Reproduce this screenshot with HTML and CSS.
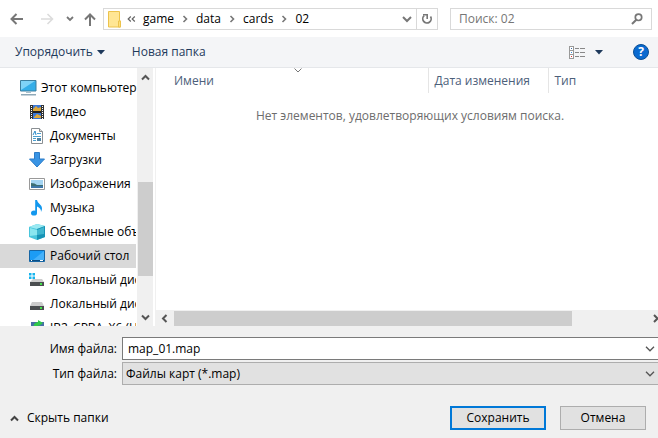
FILE: index.html
```html
<!DOCTYPE html>
<html lang="ru">
<head>
<meta charset="utf-8">
<title>Сохранение</title>
<link rel="stylesheet" href="styles.css">
</head>
<body>
<form class="dialog">
  <header class="nav">
    <button type="button" class="plain" aria-label="Назад"><svg width="14" height="12" viewBox="0 0 14 12"><path d="M6.500 1L1.500 6l5 5M2 6h11" fill="none" stroke="#777" stroke-width="2"/></svg></button>
    <button type="button" class="plain forward" aria-label="Вперёд"><svg width="14" height="12" viewBox="0 0 14 12"><path d="M7.500 1l5 5-5 5M12 6H1" fill="none" stroke="#dcdcdc" stroke-width="1.600"/></svg></button>
    <button type="button" class="plain recent" aria-label="Последние"><svg width="8" height="6" viewBox="0 0 8 6"><path d="M1 1l3 3 3-3" fill="none" stroke="#777" stroke-width="1.800"/></svg></button>
    <button type="button" class="plain up" aria-label="Вверх"><svg width="12" height="13" viewBox="0 0 12 13"><path d="M1 6.500l5-5 5 5M6 2v11" fill="none" stroke="#777" stroke-width="2"/></svg></button>
    <div class="address">
      <svg class="folder" width="14" height="17" viewBox="0 0 14 17"><path d="M.5.5h11V10h1v6H.5z" fill="#ffe694" stroke="#ecc34c"/><path d="M10.500 16v-6h2v6z" fill="#ffe07c" stroke="#ecc34c"/></svg>
      <svg class="more" width="9" height="6" viewBox="0 0 9 6"><path d="M3.800.5L1.200 3l2.600 2.500M7.800.5L5.200 3l2.600 2.500" fill="none" stroke="#666" stroke-width="1.200"/></svg>
      <nav class="crumbs">
        <a href="#">game</a><svg width="6" height="8" viewBox="0 0 6 8"><path d="M1.500 1l3 3-3 3" fill="none" stroke="#777" stroke-width="1.600"/></svg>
        <a href="#">data</a><svg width="6" height="8" viewBox="0 0 6 8"><path d="M1.500 1l3 3-3 3" fill="none" stroke="#777" stroke-width="1.600"/></svg>
        <a href="#">cards</a><svg width="6" height="8" viewBox="0 0 6 8"><path d="M1.500 1l3 3-3 3" fill="none" stroke="#777" stroke-width="1.600"/></svg>
        <a href="#">02</a>
      </nav>
      <button type="button" class="plain history" aria-label="Журнал"><svg width="10" height="7" viewBox="0 0 10 7"><path d="M1 1l4 4 4-4" fill="none" stroke="#777" stroke-width="2"/></svg></button>
      <button type="button" class="plain refresh" aria-label="Обновить"><svg width="12" height="12" viewBox="0 0 12 12"><path d="M3.200 2.600A4.200 4.200 0 1 0 9.500 3.500" fill="none" stroke="#777" stroke-width="1.700"/><path d="M2 1.800h4.200V6" fill="none" stroke="#777" stroke-width="1.600"/></svg></button>
    </div>
    <div class="search">
      <input type="search" placeholder="Поиск: 02" aria-label="Поиск">
      <svg width="12" height="12" viewBox="0 0 12 12"><circle cx="7.500" cy="4.300" r="3.200" fill="none" stroke="#777" stroke-width="1.700"/><path d="M5.300 6.700L1 11" stroke="#777" stroke-width="2"/></svg>
    </div>
  </header>

  <div class="toolbar">
    <button type="button" class="plain command">Упорядочить<svg width="8" height="5" viewBox="0 0 8 5"><path d="M0 0h8L4 4.500z" fill="#1e395b"/></svg></button>
    <button type="button" class="plain command">Новая папка</button>
    <button type="button" class="plain view" aria-label="Вид"><svg width="16" height="13" viewBox="0 0 16 13" shape-rendering="crispEdges"><path d="M.5.5h4v12h-4zM.5 4.500h4M.5 8.500h4" fill="#fff" stroke="#999"/><path d="M2 2h1v1H2z" fill="#3a6ea5"/><path d="M2 6h1v1H2z" fill="#3a8dde"/><path d="M2 10h1v1H2z" fill="#d33"/><path d="M6 2.500h4m1 0h5M6 6.500h4m1 0h5M6 10.500h4m1 0h5" stroke="#888"/></svg><svg width="8" height="5" viewBox="0 0 8 5"><path d="M0 0h8L4 4.500z" fill="#1e395b"/></svg></button>
    <button type="button" class="help" aria-label="Справка">?</button>
  </div>

  <div class="body">
    <aside class="side">
      <ul class="tree">
        <li class="root"><svg width="17" height="16" viewBox="0 0 17 16"><path d="M.5.500h15.500v10.500H.500z" fill="#35aee8" stroke="#3d7f9f"/><path d="M1 1h14L1 10z" fill="#7fd3f7"/><path d="M6 12h5v1H6z" fill="#a9c0cc"/><path d="M1 14h15v1.500H1z" fill="#8fa9b8"/></svg>Этот компьютер</li>
        <li><svg width="16" height="16" viewBox="0 0 16 16"><path d="M1 1h14v14H1z" fill="#333"/><path d="M4 1h8v14H4z" fill="#3a78d8"/><path d="M4 7h8v2H4z" fill="#222"/><path d="M4 5l3-3 2 2 3-1v4H4zM5 13l3-3 4 2v2H5z" fill="#e0a93a"/><path d="M2.500 2v13M13.500 2v13" stroke="#fff" stroke-dasharray="1 1"/></svg>Видео</li>
        <li><svg width="16" height="16" viewBox="0 0 16 16"><path d="M2.500.5h8l3 3v12h-11z" fill="#fff" stroke="#8a8f93"/><path d="M10.500.5v3h3" fill="#ddd" stroke="#8a8f93"/><path d="M4 7l2-4 1 4" fill="none" stroke="#2b8bc9"/><path d="M8 5.500h4M4 8.500h8M4 10.500h3M4 12.500h3" stroke="#4ba0d0"/><path d="M8 10h4v3H8z" fill="#4d83a5"/></svg>Документы</li>
        <li><svg width="16" height="16" viewBox="0 0 16 16"><path d="M5.500.5h5V7h5L8 15 .5 7h5z" fill="#3994e4" stroke="#2c7cc8"/></svg>Загрузки</li>
        <li><svg width="16" height="16" viewBox="0 0 16 16"><path d="M.5 2.500h15v11H.5z" fill="#fff" stroke="#999"/><path d="M2 4h12v8H2z" fill="#a4d4f2"/><path d="M2 7q4 0 6 2h6v3H2z" fill="#3d6f74"/><path d="M2 10h12v2H2z" fill="#3e76a9"/></svg>Изображения</li>
        <li><svg width="16" height="16" viewBox="0 0 16 16"><ellipse cx="5" cy="13" rx="3" ry="2.600" fill="#1398ee"/><path d="M6.200 0H8q.3 2.500 3 4.500 3.500 3 1 7.500.3-4-4-5.500V13H6.200z" fill="#1398ee"/></svg>Музыка</li>
        <li><svg width="16" height="16" viewBox="0 0 16 16"><path d="M0 3l8-3 8 2v11l-8 3-8-3z" fill="#49c6dc"/><path d="M0 3l8-3 8 2-8 3z" fill="#9ae9f2"/><path d="M8 5l8-3v11l-8 3z" fill="#1793b5"/><path d="M8 6l7-3v7l-7 1z" fill="#3fb6cf"/><path d="M1 4l7 2v5l-7 1z" fill="#8ae6ef"/></svg>Объемные объекты</li>
        <li class="selected"><svg width="16" height="16" viewBox="0 0 16 16"><path d="M.5 2.500h15v11H.5z" fill="#1c9cf5" stroke="#1766a5"/><path d="M15 3v9L4 12z" fill="#45b1fa"/><path d="M1 12.500h14" stroke="#0b4d82"/><path d="M2 12h1v1H2zM11 12h3v1h-3z" fill="#fff"/></svg>Рабочий стол</li>
        <li><svg width="16" height="16" viewBox="0 0 16 16"><path d="M0 1h2.500v2.500H0zM3.500 1H6v2.500H3.500zM0 4.500h2.500V7H0zM3.500 4.500H6V7H3.500z" fill="#15b4ee"/><path d="M4 7h9l2 3H1z" fill="#ccc"/><path d="M1 10h14v4H1z" fill="#4b4e50"/><path d="M11 11h2v2h-2z" fill="#45e04b"/></svg>Локальный диск (C:)</li>
        <li><svg width="16" height="16" viewBox="0 0 16 16"><path d="M3 6h10l2 4H1z" fill="#ccc"/><path d="M1 10h14v4H1z" fill="#4b4e50"/><path d="M11 11h2v2h-2z" fill="#45e04b"/></svg>Локальный диск (D:)</li>
        <li><svg width="16" height="16" viewBox="0 0 16 16"><path d="M2 2h13v12H2z" fill="#466fa6"/><path d="M5 10Q3 3 9 2V0l5 3-4 3V5Q8 6 9 10z" fill="#30c94a"/></svg>JB2_CPBA_X6 (H:)</li>
      </ul>
      <div class="vbar"><svg width="9" height="7" viewBox="0 0 9 7"><path d="M1 5.500L4.500 2 8 5.500" fill="none" stroke="#555" stroke-width="2"/></svg><span class="vthumb"></span><svg width="9" height="7" viewBox="0 0 9 7"><path d="M1 1.500L4.500 5 8 1.500" fill="none" stroke="#555" stroke-width="2"/></svg></div>
    </aside>
    <main class="files">
      <table class="list">
        <thead><tr><th class="name">Имени<svg class="sort" width="8" height="5" viewBox="0 0 8 5"><path d="M.5.5L4 4 7.500.5" fill="none" stroke="#777"/></svg></th><th class="date">Дата изменения</th><th class="type">Тип</th></tr></thead>
        <tbody><tr><td colspan="3">Нет элементов, удовлетворяющих условиям поиска.</td></tr></tbody>
      </table>
      <div class="hbar"><svg width="7" height="9" viewBox="0 0 7 9"><path d="M5.500 1L2 4.500 5.500 8" fill="none" stroke="#555" stroke-width="2"/></svg><span class="hthumb"></span><svg width="5" height="9" viewBox="0 0 5 9"><path d="M1 1l3.500 3.500L1 8" fill="none" stroke="#555" stroke-width="2"/></svg></div>
    </main>
  </div>

  <footer class="footer">
    <div class="fields">
      <label for="file">Имя файла:</label>
      <div class="combo"><input id="file" type="text" value="map_01.map"><svg width="10" height="6" viewBox="0 0 10 6"><path d="M1 .8l4 4 4-4" fill="none" stroke="#555" stroke-width="1.300"/></svg></div>
      <label for="kind">Тип файла:</label>
      <div class="combo"><select id="kind"><option>Файлы карт (*.map)</option></select><svg width="10" height="6" viewBox="0 0 10 6"><path d="M1 .8l4 4 4-4" fill="none" stroke="#555" stroke-width="1.300"/></svg></div>
    </div>
    <div class="actions">
      <button type="button" class="plain hide"><svg width="9" height="7" viewBox="0 0 9 7"><path d="M1 5.500L4.500 2 8 5.500" fill="none" stroke="#444" stroke-width="2"/></svg>Скрыть папки</button>
      <button type="submit" class="btn primary">Сохранить</button>
      <button type="button" class="btn">Отмена</button>
    </div>
  </footer>
</form>
</body>
</html>
```

FILE: styles.css
```css
* { box-sizing: border-box; }
body {
  margin: 0;
  font: 12px/16px "Open Sans", "Noto Sans", sans-serif;
  color: #000;
  background: #fff;
}
button, input, select { font: inherit; color: inherit; margin: 0; }
svg { display: block; flex: none; }
.dialog { display: flex; flex-direction: column; height: 100vh; overflow: hidden; }
.plain { display: flex; align-items: center; border: 0; padding: 0; background: none; }

.nav { display: flex; align-items: center; padding: 8px 6px 7px 10px; }
.forward { margin-left: 16px; }
.recent { margin-left: 12px; }
.up { margin: 0 7px 0 10px; }
.address { flex: 1; display: flex; align-items: center; height: 22px; border: 1px solid #d9d9d9; padding-left: 4px; }
.more { margin: 0 7px 0 5px; }
.crumbs { flex: 1; display: flex; align-items: center; gap: 8px; }
.crumbs a { color: #000; text-decoration: none; }
.history { margin-right: 4px; }
.refresh { align-self: stretch; padding: 0 4px; border-left: 1px solid #d9d9d9; }
.search { flex: 0 1 202px; display: flex; align-items: center; height: 22px; margin-left: 12px; padding: 0 8px; border: 1px solid #d9d9d9; }
.search input { flex: 1; min-width: 0; border: 0; padding: 0; outline: 0; background: none; }
.search input::placeholder { color: #767676; opacity: 1; }

.toolbar { display: flex; align-items: center; height: 31px; padding: 0 9px 0 15px; background: #f4f5f7; border-bottom: 1px solid #e5e7ea; color: #1e395b; }
.command { gap: 4px; margin-right: 27px; }
.view { gap: 10px; margin-left: auto; }
.help { width: 16px; height: 16px; margin-left: 30px; padding: 0; border: 1px solid #0b4f94; border-radius: 50%; background: #0a6ad0; color: #fff; font-weight: 700; line-height: 14px; }

.body { flex: 1; min-height: 0; display: flex; }
.side { display: flex; width: 156px; border-right: 1px solid #f0f0f0; }
.tree { flex: 1; min-width: 0; margin: 0; padding: 8px 0 0; list-style: none; overflow: hidden; }
.tree li { display: flex; align-items: center; gap: 5px; height: 24px; padding-left: 29px; margin-right: 1px; white-space: nowrap; overflow: hidden; }
.tree .root { gap: 4px; padding-left: 20px; margin-right: 0; }
.tree .selected { background: #d9d9d9; }
.vbar { display: flex; flex-direction: column; align-items: center; width: 16px; margin-right: 2px; padding: 6px 0 5px; background: #f0f0f0; }
.vthumb { width: 15px; height: 94px; margin: auto 0 38px; background: #cdcdcd; }

.files { flex: 1; min-width: 0; display: flex; flex-direction: column; justify-content: space-between; }
.list { width: 100%; border-collapse: collapse; table-layout: fixed; color: #6d6d6d; }
.list th { position: relative; height: 25px; padding: 0 0 0 6px; border-right: 1px solid #e5e5e5; font-weight: 400; text-align: left; color: #4c607a; }
.list .name { padding-left: 18px; }
.list .date { width: 120px; }
.list .type { width: 110px; border-right: 0; }
.sort { position: absolute; top: 0; left: 51%; }
.list td { padding: 15px 0 0 6px; text-align: center; }
.hbar { display: flex; align-items: center; height: 16px; padding: 0 0 0 5px; background: #f0f0f0; }
.hthumb { width: 398px; height: 15px; margin: 0 auto 0 6px; background: #cdcdcd; }

.footer { background: #f0f0f0; padding: 11px 0 8px; }
.fields { display: grid; grid-template-columns: 117px 1fr; gap: 2px 5px; align-items: center; }
.fields label { text-align: right; }
.combo { position: relative; }
.combo input, .combo select { display: block; appearance: none; width: 100%; height: 23px; padding: 0 20px 0 5px; border: 1px solid #7a7a7a; border-right: 0; border-radius: 0; background: #fff; outline: 0; }
.combo select { padding-left: 3px; border-color: #adadad; background: #e1e1e1; }
.combo svg { position: absolute; top: 9px; right: 3px; pointer-events: none; }
.actions { display: flex; align-items: center; gap: 14px; padding: 21px 12px 0 10px; }
.hide { gap: 8px; margin-right: auto; }
.btn { width: 86px; height: 24px; padding: 0; border: 1px solid #adadad; background: #e1e1e1; }
.primary { width: 96px; border: 2px solid #0078d7; }
```
